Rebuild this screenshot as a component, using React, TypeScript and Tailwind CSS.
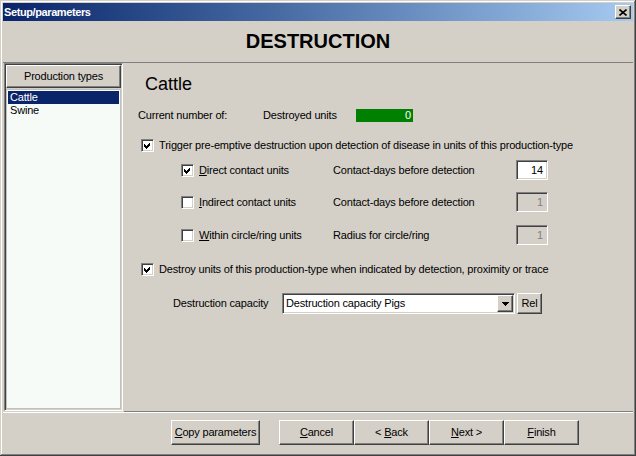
import React from "react";

// Windows classic 3D edges
const raised =
  "border border-t-white border-l-white border-r-[#404040] border-b-[#404040] shadow-[inset_-1px_-1px_#808080] bg-[#d4d0c8]";
const sunken =
  "border border-t-[#808080] border-l-[#808080] border-r-white border-b-white shadow-[inset_1px_1px_#404040,inset_-1px_-1px_#d4d0c8]";

function Check({ checked }: { checked?: boolean }) {
  return (
    <span className={`flex h-[13px] w-[13px] shrink-0 items-center justify-center bg-white ${sunken}`}>
      {checked && (
        <svg width="9" height="9" viewBox="0 0 9 9" shapeRendering="crispEdges">
          <polygon points="1,3 3,5 7,1 7,4 3,8 1,6" fill="#000" />
        </svg>
      )}
    </span>
  );
}

function NumBox({ value, disabled }: { value: string; disabled?: boolean }) {
  return (
    <div
      className={`flex h-[20px] w-[32px] items-center justify-end pr-[4px] ${sunken} ${
        disabled ? "bg-[#d4d0c8] text-[#808080]" : "bg-white text-black"
      }`}
    >
      {value}
    </div>
  );
}

function SubRow({
  checked,
  mnemonic,
  rest,
  label,
  value,
  disabled,
  className,
}: {
  checked?: boolean;
  mnemonic: string;
  rest: string;
  label: string;
  value: string;
  disabled?: boolean;
  className: string;
}) {
  return (
    <div className={`flex h-[20px] items-center pl-[57px] ${className}`}>
      <Check checked={checked} />
      <span className="ml-[5px] w-[134px]">
        <u>{mnemonic}</u>
        {rest}
      </span>
      <span className="w-[183px]">{label}</span>
      <NumBox value={value} disabled={disabled} />
    </div>
  );
}

export default function App() {
  return (
    <div className="flex h-[456px] w-[636px] flex-col bg-[#d4d0c8] p-[3px] font-['Liberation_Sans',Arial,sans-serif] text-[11px] leading-[13px] tracking-[-0.18px] text-black shadow-[inset_-1px_-1px_#404040,inset_1px_1px_#d4d0c8,inset_-2px_-2px_#808080,inset_2px_2px_#ffffff]">
      {/* title bar */}
      <div className="flex h-[18px] shrink-0 items-center justify-between bg-linear-to-r from-[#0a246a] to-[#a6caf0] pl-[1px] pr-[2px]">
        <span className="text-[11px] font-bold tracking-[-0.4px] text-white">Setup/parameters</span>
        <div className={`flex h-[14px] w-[16px] items-center justify-center ${raised}`}>
          <svg width="8" height="7" viewBox="0 0 8 7">
            <path d="M0.5 0.5 L7.5 6.5 M7.5 0.5 L0.5 6.5" stroke="#000" strokeWidth="1.6" />
          </svg>
        </div>
      </div>

      {/* heading */}
      <div className="flex h-[42px] shrink-0 items-center justify-center border-b border-[#808080] text-[20px] font-bold tracking-normal">
        DESTRUCTION
      </div>

      {/* body */}
      <div className="flex h-[349px] shrink-0">
        <div className={`ml-[1px] flex h-[348px] w-[119px] flex-col p-[1px] ${sunken}`}>
          <div className={`flex h-[23px] shrink-0 items-center justify-center ${raised}`}>
            Production types
          </div>
          <div className="mt-[1px] flex-1 border border-[#c0c0c0] bg-[#f7fbf7] p-[1px]">
            <div className="h-[13px] bg-[#0a246a] pl-[2px] text-white">Cattle</div>
            <div className="h-[13px] pl-[2px]">Swine</div>
          </div>
        </div>

        <div className="ml-[1px] flex flex-1 flex-col border-b border-[#808080]">
          <div className="mt-[10px] h-[22px] pl-[21px] text-[18px] leading-[22px] tracking-normal">Cattle</div>

          <div className="mt-[14px] flex h-[13px] items-center pl-[14px]">
            <span className="w-[125px]">Current number of:</span>
            <span className="w-[93px]">Destroyed units</span>
            <div className="h-[13px] w-[57px] bg-[#008000] pr-[2px] text-right text-white">0</div>
          </div>

          <div className="mt-[17px] flex h-[13px] items-center gap-[5px] pl-[17px]">
            <Check checked />
            <span>Trigger pre-emptive destruction upon detection of disease in units of this production-type</span>
          </div>

          <SubRow
            className="mt-[8px]"
            checked
            mnemonic="D"
            rest="irect contact units"
            label="Contact-days before detection"
            value="14"
          />
          <SubRow
            className="mt-[12px]"
            mnemonic="I"
            rest="ndirect contact units"
            label="Contact-days before detection"
            value="1"
            disabled
          />
          <SubRow
            className="mt-[13px]"
            mnemonic="W"
            rest="ithin circle/ring units"
            label="Radius for circle/ring"
            value="1"
            disabled
          />

          <div className="mt-[18px] flex h-[13px] items-center gap-[5px] pl-[17px]">
            <Check checked />
            <span>Destroy units of this production-type when indicated by detection, proximity or trace</span>
          </div>

          <div className="mt-[17px] flex h-[21px] items-center pl-[49px]">
            <span className="w-[109px]">Destruction capacity</span>
            <div className={`flex h-[21px] w-[233px] items-center bg-white pl-[3px] ${sunken}`}>
              <span className="flex-1">Destruction capacity Pigs</span>
              <div className={`mr-[1px] flex h-[17px] w-[16px] items-center justify-center ${raised}`}>
                <svg width="7" height="4" viewBox="0 0 7 4" shapeRendering="crispEdges">
                  <polygon points="0,0 7,0 3.5,4" fill="#000" />
                </svg>
              </div>
            </div>
            <div className={`ml-[2px] flex h-[21px] w-[25px] items-center justify-center ${raised}`}>Rel</div>
          </div>
        </div>
      </div>

      {/* footer buttons */}
      <div className="flex h-[41px] shrink-0 border-t border-white pl-[168px] pt-[7px]">
        <div className={`flex h-[25px] w-[89px] items-center justify-center ${raised}`}>
          <span>
            <u>C</u>opy parameters
          </span>
        </div>
        <div className={`ml-[19px] flex h-[25px] w-[75px] items-center justify-center ${raised}`}>
          <span>
            <u>C</u>ancel
          </span>
        </div>
        <div className={`flex h-[25px] w-[75px] items-center justify-center ${raised}`}>
          <span>
            &lt; <u>B</u>ack
          </span>
        </div>
        <div className={`flex h-[25px] w-[75px] items-center justify-center ${raised}`}>
          <span>
            <u>N</u>ext &gt;
          </span>
        </div>
        <div className={`flex h-[25px] w-[75px] items-center justify-center ${raised}`}>
          <span>
            <u>F</u>inish
          </span>
        </div>
      </div>
    </div>
  );
}
